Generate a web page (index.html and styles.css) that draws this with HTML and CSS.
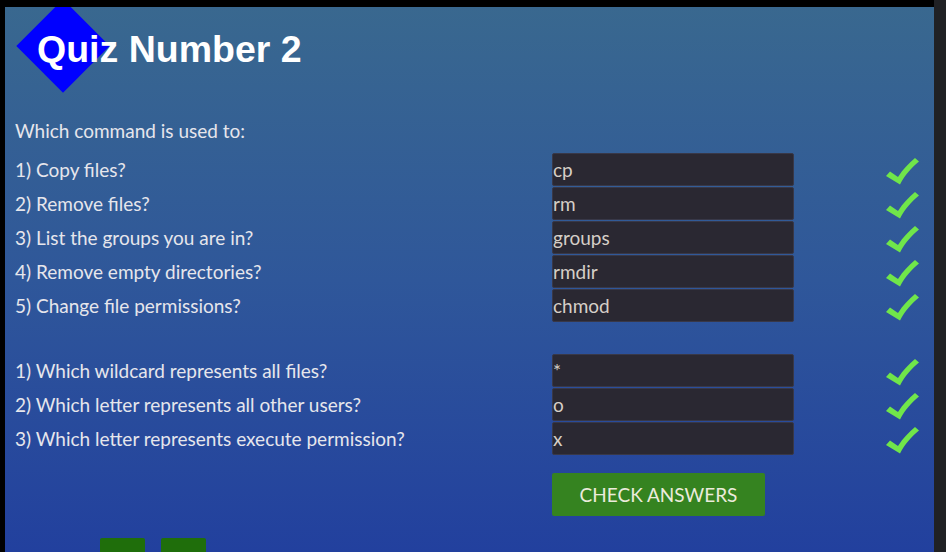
FILE: index.html
```html
<!DOCTYPE html>
<html>
<head>
<meta charset="utf-8">
<link rel="stylesheet" href="styles.css">
</head>
<body>
<div class="frame">
  <div class="stage">
    <main class="panel">
      <header class="header">
        <div class="diamond"></div>
        <h1 class="title">Quiz Number 2</h1>
      </header>
      <section class="content">
        <p class="intro">Which command is used to:</p>
        <div class="group">
          <label class="q">1) Copy files?</label><input class="ans" value="cp"><span class="ok"><svg viewBox="0 0 34 28" width="34" height="28"><path d="M1 19 L5 14.5 L13 20 C18 12 24 6 30 1 L34 4.5 C26 11 20 18 15 27.5 Z"/></svg></span>
          <label class="q">2) Remove files?</label><input class="ans" value="rm"><span class="ok"><svg viewBox="0 0 34 28" width="34" height="28"><path d="M1 19 L5 14.5 L13 20 C18 12 24 6 30 1 L34 4.5 C26 11 20 18 15 27.5 Z"/></svg></span>
          <label class="q">3) List the groups you are in?</label><input class="ans" value="groups"><span class="ok"><svg viewBox="0 0 34 28" width="34" height="28"><path d="M1 19 L5 14.5 L13 20 C18 12 24 6 30 1 L34 4.5 C26 11 20 18 15 27.5 Z"/></svg></span>
          <label class="q">4) Remove empty directories?</label><input class="ans" value="rmdir"><span class="ok"><svg viewBox="0 0 34 28" width="34" height="28"><path d="M1 19 L5 14.5 L13 20 C18 12 24 6 30 1 L34 4.5 C26 11 20 18 15 27.5 Z"/></svg></span>
          <label class="q">5) Change file permissions?</label><input class="ans" value="chmod"><span class="ok"><svg viewBox="0 0 34 28" width="34" height="28"><path d="M1 19 L5 14.5 L13 20 C18 12 24 6 30 1 L34 4.5 C26 11 20 18 15 27.5 Z"/></svg></span>
        </div>
        <div class="group group-two">
          <label class="q">1) Which wildcard represents all files?</label><input class="ans" value="*"><span class="ok"><svg viewBox="0 0 34 28" width="34" height="28"><path d="M1 19 L5 14.5 L13 20 C18 12 24 6 30 1 L34 4.5 C26 11 20 18 15 27.5 Z"/></svg></span>
          <label class="q">2) Which letter represents all other users?</label><input class="ans" value="o"><span class="ok"><svg viewBox="0 0 34 28" width="34" height="28"><path d="M1 19 L5 14.5 L13 20 C18 12 24 6 30 1 L34 4.5 C26 11 20 18 15 27.5 Z"/></svg></span>
          <label class="q">3) Which letter represents execute permission?</label><input class="ans" value="x"><span class="ok"><svg viewBox="0 0 34 28" width="34" height="28"><path d="M1 19 L5 14.5 L13 20 C18 12 24 6 30 1 L34 4.5 C26 11 20 18 15 27.5 Z"/></svg></span>
        </div>
        <div class="actions">
          <button class="check">CHECK ANSWERS</button>
        </div>
        <div class="nav">
          <span class="nav-btn"></span>
          <span class="nav-btn"></span>
        </div>
      </section>
    </main>
  </div>
  <div class="scrollbar"></div>
</div>
</body>
</html>
```

FILE: styles.css
```css
html, body {
  margin: 0;
  padding: 0;
  background: #000;
  overflow: hidden;
}

.frame {
  display: flex;
  width: 946px;
  height: 552px;
}

.stage {
  width: 929px;
  padding: 7px 0 0 5px;
  background: #000;
}

.scrollbar {
  width: 12px;
  background: #202124;
}

.panel {
  position: relative;
  height: 545px;
  overflow: hidden;
  background: linear-gradient(to bottom, #39688f 0%, #2f579a 50%, #22409e 100%);
  font-family: Lato, "Open Sans", sans-serif;
  font-size: 19px;
  color: #e6e6ec;
}

.header {
  position: relative;
  height: 107px;
  box-sizing: border-box;
  padding: 20px 0 0 32px;
}

.diamond {
  position: absolute;
  left: 25px;
  top: 6px;
  width: 66px;
  height: 66px;
  background: #0000ff;
  transform: rotate(45deg);
}

.title {
  position: relative;
  margin: 0;
  font-family: "Liberation Sans", Arial, sans-serif;
  font-weight: bold;
  font-size: 37.5px;
  line-height: 44px;
  color: #fff;
}

.content {
  padding-left: 10px;
}

.intro {
  margin: 0 0 5px;
  line-height: 34px;
}

.group {
  display: grid;
  grid-template-columns: 537px 242px 91px 34px;
  grid-auto-rows: 34px;
  align-items: start;
}

.group-two {
  margin-top: 31px;
}

.q {
  line-height: 34px;
  grid-column: 1;
}

.ans {
  grid-column: 2;
  box-sizing: border-box;
  width: 242px;
  height: 33px;
  margin: 0;
  padding: 0;
  border: 1px solid #383848;
  border-radius: 2px;
  background: #2a2832;
  color: #d6cfc8;
  font-family: Lato, "Open Sans", sans-serif;
  font-size: 19px;
  outline: none;
}

.ok {
  grid-column: 4;
  display: block;
  height: 28px;
  margin-top: 4px;
}

.ok svg {
  display: block;
  fill: #70e64a;
}

.actions {
  margin-top: 17px;
  padding-left: 537px;
}

.check {
  display: block;
  width: 213px;
  height: 43px;
  margin: 0;
  border: none;
  border-radius: 2px;
  background: #358320;
  color: #ecebdc;
  font-family: Lato, "Open Sans", sans-serif;
  font-size: 19px;
  padding: 0;
}

.nav {
  display: flex;
  gap: 16px;
  margin: 22px 0 0 85px;
}

.nav-btn {
  display: block;
  width: 45px;
  height: 30px;
  border-radius: 2px 2px 0 0;
  background: #1f6e0b;
}
```
